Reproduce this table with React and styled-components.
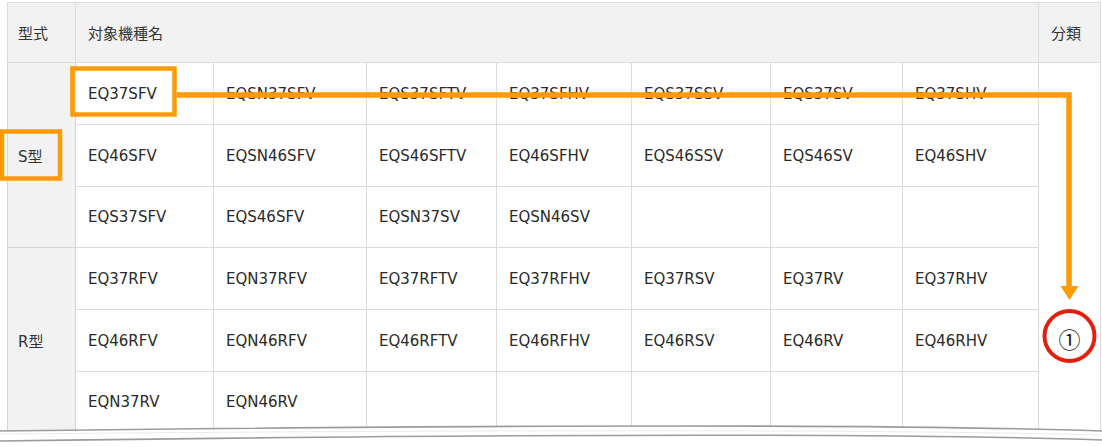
import React from "react"
import styled, { createGlobalStyle } from "styled-components"

const GlobalStyle = createGlobalStyle`
	html, body {
		margin: 0;
		padding: 0;
		background: #fff;
	}
	body {
		font-family: "DejaVu Sans", "Noto Sans CJK JP", sans-serif;
		color: #333;
	}
`

const ORANGE = "#ff9a00"
const RED = "#e3200f"

const widths = [68, 138, 153, 130, 135, 139, 132, 136, 62]

const groups = [
	{
		label: "S型",
		mark: "",
		rows: [
			["EQ37SFV", "EQSN37SFV", "EQS37SFTV", "EQ37SFHV", "EQS37SSV", "EQS37SV", "EQ37SHV"],
			["EQ46SFV", "EQSN46SFV", "EQS46SFTV", "EQ46SFHV", "EQS46SSV", "EQS46SV", "EQ46SHV"],
			["EQS37SFV", "EQS46SFV", "EQSN37SV", "EQSN46SV", "", "", ""],
		],
	},
	{
		label: "R型",
		mark: "①",
		rows: [
			["EQ37RFV", "EQN37RFV", "EQ37RFTV", "EQ37RFHV", "EQ37RSV", "EQ37RV", "EQ37RHV"],
			["EQ46RFV", "EQN46RFV", "EQ46RFTV", "EQ46RFHV", "EQ46RSV", "EQ46RV", "EQ46RHV"],
			["EQN37RV", "EQN46RV", "", "", "", "", ""],
		],
	},
]

const Page = styled.div`
	position: relative;
	width: 1102px;
	height: 447px;
	padding: 2px 2px 0 7px;
	box-sizing: border-box;
	overflow: hidden;
`

const Table = styled.table`
	border-collapse: collapse;
	table-layout: fixed;
	width: 1093px;
	font-size: 15px;
	border: 1px solid #e2e2e2;
`

const HeadCell = styled.th`
	height: 59px;
	padding: 0 ${(p) => (p.$first ? "10px" : "12px")};
	background: #f2f2f2;
	border: 1px solid #dcdcdc;
	font-weight: 400;
	text-align: left;
	color: #333;
`

const TypeCell = styled.td`
	padding: 0 10px;
	background: #f2f2f2;
	border: 1px solid #d6d6d6;
`

const ModelCell = styled.td`
	height: ${(p) => (p.$short ? "60px" : "61px")};
	padding: 0 12px;
	border: 1px solid #dcdcdc;
	white-space: nowrap;
	overflow: hidden;
	color: #2a2a2a;
`

const ClassCell = styled.td`
	padding: 0 0 4px;
	border: 1px solid #dcdcdc;
	border-top-style: ${(p) => (p.$first ? "solid" : "none")};
	border-bottom-style: ${(p) => (p.$first ? "none" : "solid")};
	text-align: center;
	font-family: "Noto Sans CJK JP", sans-serif;
	font-size: 22px;
	font-weight: 400;
	color: #1a1a1a;
`

const Overlay = styled.svg`
	position: absolute;
	left: 0;
	top: 0;
	pointer-events: none;
`

const Tear = styled.svg`
	position: absolute;
	left: 0;
	bottom: 0;
`

function Highlights() {
	return (
		<Overlay width="1102" height="447" viewBox="0 0 1102 447">
			<rect x="72.5" y="68.5" width="102" height="46" fill="none" stroke={ORANGE} strokeWidth="4.5" />
			<rect x="2" y="131.5" width="58" height="47" fill="none" stroke={ORANGE} strokeWidth="4.5" />
			<polyline points="177,95 1069,95 1069,288" fill="none" stroke={ORANGE} strokeWidth="5.5" />
			<polygon points="1060.5,286 1078.5,286 1069.5,300" fill={ORANGE} />
			<circle cx="1069.5" cy="336" r="25" fill="none" stroke={RED} strokeWidth="4" />
		</Overlay>
	)
}

function TornEdge() {
	return (
		<Tear width="1102" height="24" viewBox="0 423 1102 24">
			<path d="M0,431 Q800,421 1102,431 L1102,447 L0,447 Z" fill="#fff" />
			<path d="M0,431 Q800,421 1102,431" fill="none" stroke="#9c9c9c" strokeWidth="1.6" />
			<path d="M0,434 Q800,427 1102,435" fill="none" stroke="#ececec" strokeWidth="1" />
			<path d="M0,441 Q800,430 1102,440" fill="none" stroke="#9c9c9c" strokeWidth="1.6" />
		</Tear>
	)
}

export default function App() {
	return (
		<Page>
			<GlobalStyle />
			<Table>
				<colgroup>
					{widths.map((w, i) => (
						<col key={i} style={{ width: w }} />
					))}
				</colgroup>
				<thead>
					<tr>
						<HeadCell $first>型式</HeadCell>
						<HeadCell colSpan={7}>対象機種名</HeadCell>
						<HeadCell>分類</HeadCell>
					</tr>
				</thead>
				<tbody>
					{groups.map((g, gi) =>
						g.rows.map((row, ri) => (
							<tr key={`${gi}-${ri}`}>
								{ri === 0 && <TypeCell rowSpan={3}>{g.label}</TypeCell>}
								{row.map((name, ci) => (
									<ModelCell key={ci} $short={ri === 2}>
										{name}
									</ModelCell>
								))}
								{ri === 0 && (
									<ClassCell rowSpan={3} $first={gi === 0}>
										{g.mark}
									</ClassCell>
								)}
							</tr>
						))
					)}
				</tbody>
			</Table>
			<TornEdge />
			<Highlights />
		</Page>
	)
}
